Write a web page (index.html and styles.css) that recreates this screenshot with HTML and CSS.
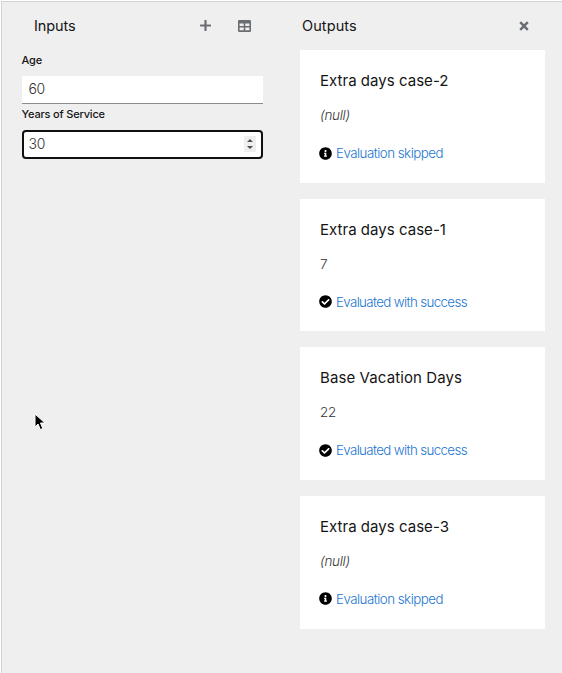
FILE: index.html
```html
<!DOCTYPE html>
<html lang="en">
<head>
<meta charset="utf-8">
<title>DMN Runner</title>
<link rel="stylesheet" href="styles.css">
</head>
<body>
<svg class="sprite" aria-hidden="true">
  <symbol id="check" viewBox="0 0 512 512"><path d="M504 256c0 137-111 248-248 248S8 393 8 256 119 8 256 8s248 111 248 248zM227.300 387.300l184-184c6.200-6.200 6.200-16.400 0-22.600l-22.600-22.600c-6.200-6.200-16.400-6.200-22.600 0L216 308.100l-70.100-70.100c-6.200-6.200-16.400-6.200-22.600 0l-22.600 22.600c-6.200 6.200-6.200 16.400 0 22.600l104 104c6.200 6.300 16.400 6.300 22.600.1z"/></symbol>
  <symbol id="info" viewBox="0 0 512 512"><path d="M256 8C119 8 8 119 8 256s111 248 248 248 248-111 248-248S393 8 256 8zm0 110c23.200 0 42 18.800 42 42s-18.800 42-42 42-42-18.800-42-42 18.800-42 42-42zm56 254c0 6.600-5.400 12-12 12h-88c-6.600 0-12-5.400-12-12v-24c0-6.600 5.400-12 12-12h12v-64h-12c-6.600 0-12-5.400-12-12v-24c0-6.600 5.400-12 12-12h64c6.600 0 12 5.400 12 12v100h12c6.600 0 12 5.400 12 12v24z"/></symbol>
</svg>
<main class="runner">
  <section class="inputs">
    <header class="bar">
      <h2>Inputs</h2>
      <svg class="plus" viewBox="0 0 11 11"><path d="M5.500 .8v9.400M.8 5.500h9.400"/></svg>
      <svg class="table" viewBox="0 0 13 12"><path fill-rule="evenodd" d="M1.200 0h10.600Q13 0 13 1.200v9.600Q13 12 11.800 12H1.200Q0 12 0 10.800V1.200Q0 0 1.200 0zM1.600 3.500v2.400h4.100V3.500zm5.700 0v2.400h4.100V3.500zM1.600 7.500v2.700h4.100V7.500zm5.700 0v2.700h4.100V7.500z"/></svg>
    </header>
    <form class="form">
      <label class="age-label">Age</label>
      <div class="field">60</div>
      <label class="years-label">Years of Service</label>
      <div class="field focused">30<span class="spinner"><svg viewBox="0 0 12 16"><path d="M3 6 6 3l3 3zM3 10l3 3 3-3z"/></svg></span></div>
    </form>
  </section>
  <section class="outputs">
    <header class="bar">
      <h2 class="t-outputs">Outputs</h2>
      <svg class="close" viewBox="0 0 10 10"><path d="m1.200 1.200 7.600 7.600M8.800 1.200 1.200 8.800"/></svg>
    </header>
    <div class="cards">
      <article class="card">
        <h3>Extra days case-2</h3>
        <p class="value null">(null)</p>
        <a class="status skipped"><svg><use href="#info"/></svg><span>Evaluation skipped</span></a>
      </article>
      <article class="card">
        <h3>Extra days case-1</h3>
        <p class="value">7</p>
        <a class="status"><svg><use href="#check"/></svg><span>Evaluated with success</span></a>
      </article>
      <article class="card">
        <h3 class="base">Base Vacation Days</h3>
        <p class="value">22</p>
        <a class="status"><svg><use href="#check"/></svg><span>Evaluated with success</span></a>
      </article>
      <article class="card">
        <h3>Extra days case-3</h3>
        <p class="value null">(null)</p>
        <a class="status skipped"><svg><use href="#info"/></svg><span>Evaluation skipped</span></a>
      </article>
    </div>
  </section>
</main>
<svg class="cursor" viewBox="0 0 12 18"><path d="M1 1v13l3-3 2.300 5.500 2.500-1L6.500 10H11z"/></svg>
</body>
</html>
```

FILE: styles.css
```css
* { box-sizing: border-box; }
body {
  margin: 0;
  background: #fff;
  color: #151515;
  font-family: Inter, "Liberation Sans", sans-serif;
  font-size: 14px;
}
h2, h3, p { margin: 0; font-weight: 400; }
.sprite { display: none; }
.runner {
  display: flex;
  height: 672px;
  margin: 1px 0 0 1px;
  background: #efefef;
  border: solid #d2d2d2;
  border-width: 1px 0 0 1px;
}
.inputs { width: 279px; padding-left: 20px; }
.outputs { width: 281px; padding-left: 19px; }
.bar { display: flex; align-items: center; height: 48px; }
.bar h2 { font-size: 14.500px; line-height: 24px; letter-spacing: -.1px; }
.bar svg { flex: none; margin-top: -1px; }
.inputs h2 { width: 166px; padding-left: 12px; }
.outputs h2 { width: 219px; padding-left: 2px; letter-spacing: .1px; }
.plus { width: 11px; height: 11px; fill: none; stroke: #6a6e73; stroke-width: 2.200; stroke-linecap: round; }
.table { width: 13px; height: 12px; margin-left: 27px; fill: #6a6e73; }
.close { width: 10px; height: 10px; fill: none; stroke: #6a6e73; stroke-width: 2.500; }
.inputs .bar svg.plus { margin-left: 12px; }
.form { display: flex; flex-direction: column; width: 241px; margin-left: -.5px; }
label { color: #151515; font-size: 11px; font-weight: 500; line-height: 20px; letter-spacing: -.18px; }
.age-label { height: 26px; }
.years-label { height: 26px; }
.field {
  position: relative;
  height: 28px;
  padding-left: 7px;
  background: #fff;
  border-bottom: 1px solid #8a8d90;
  color: #333;
  font-weight: 300;
  line-height: 26px;
  letter-spacing: -.3px;
}
.focused {
  height: 29px;
  padding-left: 5px;
  border: 2px solid #101010;
  border-radius: 4px;
  line-height: 24px;
}
.spinner {
  position: absolute;
  top: 4px;
  right: 5px;
  width: 12px;
  height: 16px;
  background: #efefef;
}
.spinner svg { display: block; width: 12px; height: 16px; fill: #505050; }
.cards { display: flex; flex-direction: column; gap: 16px; width: 245px; }
.card { height: 132.670px; padding: 19px 20px 0; background: #fff; }
.card h3 { font-size: 15px; line-height: 24px; letter-spacing: .03px; white-space: nowrap; }
.card .base { letter-spacing: .1px; }
.value { height: 20px; margin-top: 12px; color: #333; font-size: 13.500px; font-weight: 300; line-height: 20px; letter-spacing: -.3px; }
.null { font-style: italic; }
.status { display: flex; align-items: center; height: 20px; margin-top: 18px; margin-left: -1px; color: #1b76d0; font-size: 13.300px; font-weight: 300; letter-spacing: -.62px; white-space: nowrap; }
.skipped { letter-spacing: -.5px; }
.status svg { flex: none; width: 13px; height: 13px; margin-right: 4px; fill: #000; }
.cursor { position: absolute; top: 413px; left: 34px; width: 12px; height: 18px; fill: #000; stroke: #fff; stroke-width: 1; }
```
